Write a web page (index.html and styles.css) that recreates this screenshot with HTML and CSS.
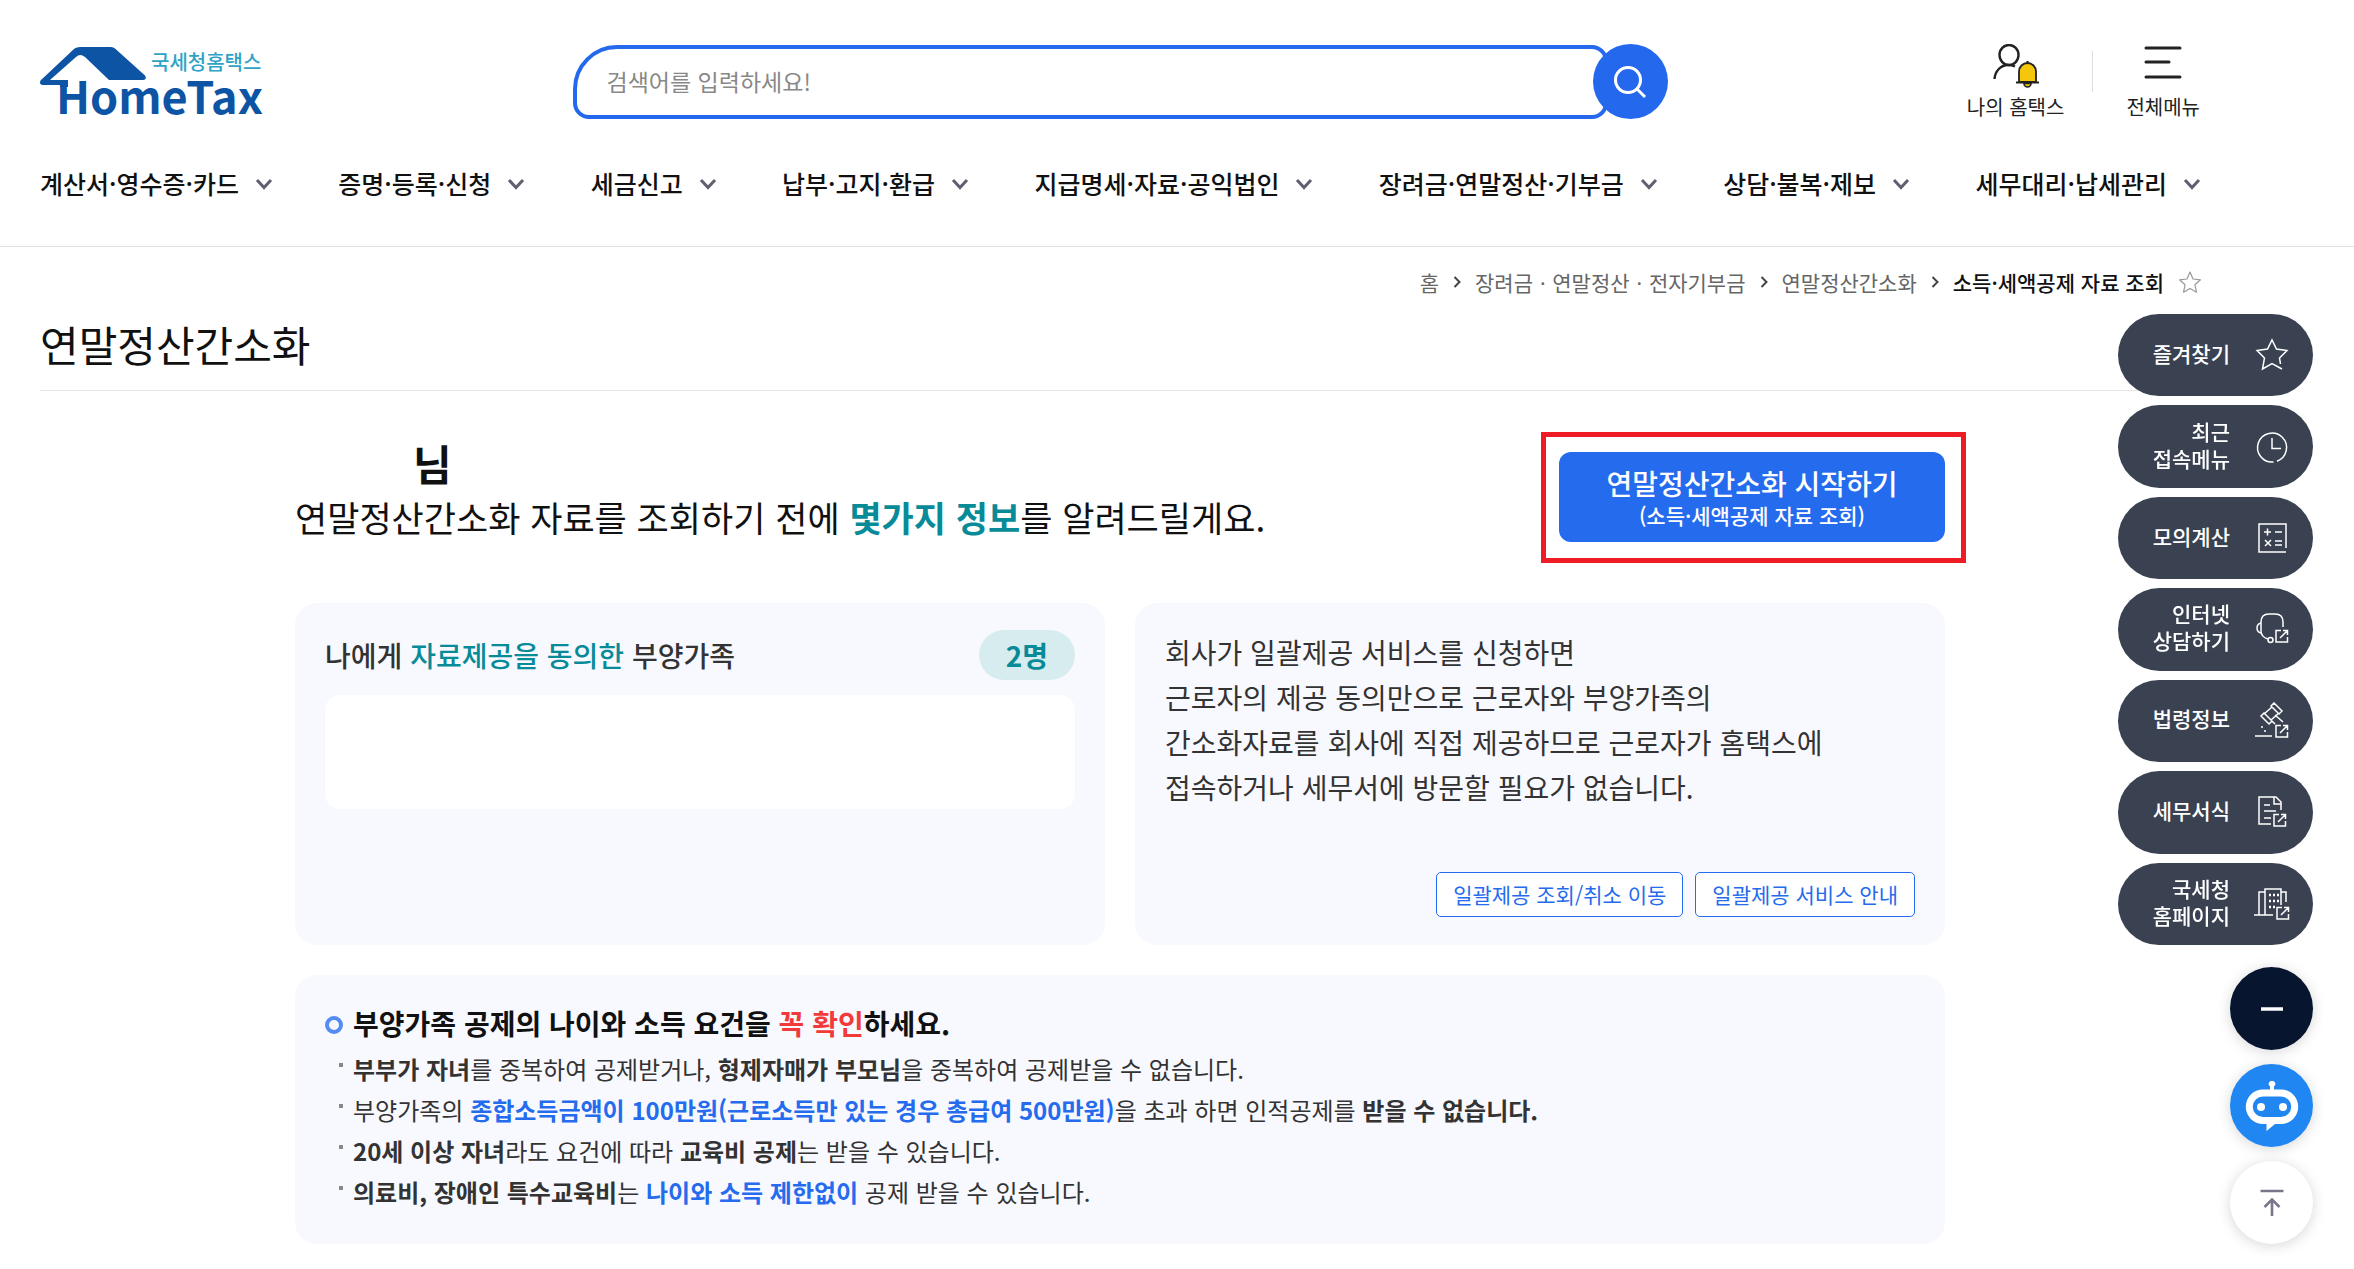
FILE: index.html
```html
<!DOCTYPE html>
<html lang="ko">
<head>
<meta charset="utf-8">
<meta name="viewport" content="width=device-width, initial-scale=1">
<title>연말정산간소화 - 국세청홈택스</title>
<link rel="stylesheet" href="styles.css">
</head>
<body>
<svg class="defs" width="0" height="0" aria-hidden="true">
  <symbol id="chevron" viewBox="0 0 20 20"><path d="M3 7l7 7.500 7-7.500" fill="none" stroke="#5f5f70" stroke-width="3"/></symbol>
  <symbol id="external" viewBox="0 0 14 14"><path d="M6 1.500H1V13H12.500V8M5 9L12 2M8 1.500h4.500V6" fill="none" stroke="currentColor" stroke-width="1.500"/></symbol>
</svg>

<header class="header">
  <div class="header-top container">
    <a class="logo" href="#" aria-label="국세청홈택스 HomeTax">
      <svg width="226" height="72" viewBox="0 0 226 72">
        <path fill="#0d54a5" d="M37 0.500Q38.500 0 40 0H71Q73.500 0 75 1.500L105 28.500Q106.500 30.500 105.500 31.800Q104.500 33 103 33H69L45 10Q40 6 36 10L10 33H28V40H20V38H2Q-1 37 0.500 33.500L34 2Q35.500 0.800 37 0.500Z"/>
        <text class="logo-name" x="111" y="23">국세청홈택스</text>
        <text class="logo-word" x="16" y="67">HomeTax</text>
      </svg>
    </a>
    <form class="search">
      <input class="search-input" type="text" aria-label="검색어" placeholder="검색어를 입력하세요!">
      <button class="search-button" type="button" aria-label="검색">
        <svg width="36" height="36" viewBox="0 0 36 36" fill="none" stroke="#fff" stroke-width="3"><circle cx="16" cy="16" r="12.500"/><path d="M25 25l8 8"/></svg>
      </button>
    </form>
    <div class="tools">
      <a class="tool" href="#">
        <svg width="48" height="46" viewBox="0 1 48 46" fill="none" stroke="#222" stroke-width="2.400">
          <ellipse cx="17" cy="12" rx="9.500" ry="10"/><path d="M2.500 36C3 28 9 22 16 22c3 0 5 .5 7 1.500"/>
          <path d="M27 39V28.500a8.500 8.500 0 0 1 17 0V39Z" fill="#f5c60c" stroke-width="1.800"/><path d="M24 39.500h23M35.500 20v-2" stroke-width="2"/><path d="M32 40.500a3.500 3.500 0 0 0 7 0Z" fill="#f5c60c" stroke-width="1.600"/>
        </svg>
        <span>나의 홈택스</span>
      </a>
      <button class="tool tool-menu" type="button">
        <svg width="48" height="46" viewBox="0 0 48 46" fill="none" stroke="#222" stroke-width="3" stroke-linecap="round"><path d="M7 4h34M7 18h23M7 33h34"/></svg>
        <span>전체메뉴</span>
      </button>
    </div>
  </div>
  <nav class="nav container" aria-label="주 메뉴">
    <a href="#">계산서·영수증·카드<svg class="chevron"><use href="#chevron"/></svg></a>
    <a href="#">증명·등록·신청<svg class="chevron"><use href="#chevron"/></svg></a>
    <a href="#">세금신고<svg class="chevron"><use href="#chevron"/></svg></a>
    <a href="#">납부·고지·환급<svg class="chevron"><use href="#chevron"/></svg></a>
    <a href="#">지급명세·자료·공익법인<svg class="chevron"><use href="#chevron"/></svg></a>
    <a href="#">장려금·연말정산·기부금<svg class="chevron"><use href="#chevron"/></svg></a>
    <a href="#">상담·불복·제보<svg class="chevron"><use href="#chevron"/></svg></a>
    <a href="#">세무대리·납세관리<svg class="chevron"><use href="#chevron"/></svg></a>
  </nav>
</header>

<main class="container">
  <nav class="breadcrumb" aria-label="현재 위치">
    <a href="#">홈</a>
    <svg class="sep" viewBox="0 0 8 12"><path d="M1.500 1L6.500 6l-5 5"/></svg>
    <a href="#">장려금ㆍ연말정산ㆍ전자기부금</a>
    <svg class="sep" viewBox="0 0 8 12"><path d="M1.500 1L6.500 6l-5 5"/></svg>
    <a href="#">연말정산간소화</a>
    <svg class="sep" viewBox="0 0 8 12"><path d="M1.500 1L6.500 6l-5 5"/></svg>
    <strong>소득·세액공제 자료 조회</strong>
    <button class="favorite" type="button" aria-label="즐겨찾기 추가">
      <svg width="24" height="24" viewBox="0 0 24 24" fill="none" stroke="#999" stroke-width="1.200" stroke-linejoin="round"><path d="M12 2l3 7 7.500.8-5.600 5 1.600 7.400L12 18.500l-6.500 3.700 1.600-7.400-5.600-5L9 9Z"/></svg>
    </button>
  </nav>
  <h1 class="page-title">연말정산간소화</h1>

  <div class="content">
    <section class="intro">
      <div class="intro-text">
        <p class="user-name">님</p>
        <p class="intro-lead">연말정산간소화 자료를 조회하기 전에 <strong>몇가지 정보</strong>를 알려드릴게요.</p>
      </div>
      <div class="highlight">
        <button class="start" type="button">연말정산간소화 시작하기<small>(소득·세액공제 자료 조회)</small></button>
      </div>
    </section>

    <div class="cards">
      <section class="card">
        <div class="card-head">
          <h2>나에게 <em>자료제공을 동의한</em> 부양가족</h2>
          <span class="count">2명</span>
        </div>
        <div class="family-list"></div>
      </section>
      <section class="card card-company">
        <p>회사가 일괄제공 서비스를 신청하면<br>근로자의 제공 동의만으로 근로자와 부양가족의<br>간소화자료를 회사에 직접 제공하므로 근로자가 홈택스에<br>접속하거나 세무서에 방문할 필요가 없습니다.</p>
        <div class="card-actions">
          <button class="outline" type="button">일괄제공 조회/취소 이동</button>
          <button class="outline" type="button">일괄제공 서비스 안내</button>
        </div>
      </section>
    </div>

    <section class="card notice">
      <h2>부양가족 공제의 나이와 소득 요건을 <em>꼭 확인</em>하세요.</h2>
      <ul>
        <li><b>부부가 자녀</b>를 중복하여 공제받거나, <b>형제자매가 부모님</b>을 중복하여 공제받을 수 없습니다.</li>
        <li>부양가족의 <b class="blue">종합소득금액이 100만원(근로소득만 있는 경우 총급여 500만원)</b>을 초과 하면 인적공제를 <b>받을 수 없습니다.</b></li>
        <li><b>20세 이상 자녀</b>라도 요건에 따라 <b>교육비 공제</b>는 받을 수 있습니다.</li>
        <li><b>의료비, 장애인 특수교육비</b>는 <b class="blue">나이와 소득 제한없이</b> 공제 받을 수 있습니다.</li>
      </ul>
    </section>
  </div>
</main>

<aside class="quick" aria-label="빠른 메뉴">
  <div class="quick-links">
    <a href="#"><span>즐겨찾기</span>
      <svg viewBox="0 0 38 38"><path d="M29 33L19 27.500 9.500 33 11.500 22 4 14.500 14.500 13 19 4l4.500 9L34 14.500 26.500 22l1 6"/></svg></a>
    <a href="#"><span>최근<br>접속메뉴</span>
      <svg viewBox="0 0 38 38"><path d="M20.500 34A14.500 14.500 0 1 1 24 33.200M19 10v10.500h9"/></svg></a>
    <a href="#"><span>모의계산</span>
      <svg viewBox="0 0 38 38"><path d="M33 29V5H6v28h27M11 13h7M14.500 9.500v7M22 13h7M12 21l6 6M18 21l-6 6M22 22h7M22 26h7"/></svg></a>
    <a href="#"><span>인터넷<br>상담하기</span>
      <svg viewBox="0 0 38 38"><path d="M30 17v-5q0-8-8-8h-6q-8 0-8 8v9q0 6 7 8M8 13q-4 1-4 5t4 5"/><circle cx="17.500" cy="30" r="2.500"/><use href="#external" x="22" y="19" width="14" height="14"/></svg></a>
    <a href="#"><span>법령정보</span>
      <svg viewBox="0 0 38 38"><path d="M18 4l3-3 8 8-3 3ZM8 14l3-3 8 8-3 3ZM19 5l-8 7M26 11l-8 7M18 18l4 4M22 13l8 7M2 34h17M8 25h2M11 29h2"/><use href="#external" x="22" y="22" width="14" height="14"/></svg></a>
    <a href="#"><span>세무서식</span>
      <svg viewBox="0 0 38 38"><path d="M18 31H6V4h17l5 5v8M21 4v7h7M11 12h6M11 18h12M11 25h7"/><use href="#external" x="20" y="20" width="14" height="14"/></svg></a>
    <a href="#"><span>국세청<br>홈페이지</span>
      <svg viewBox="0 0 38 38"><path d="M1 30h19M6 30V7h6M12 30V4h16v16M28 7h5v10"/><path d="M16 10h10M16 16h10M16 22h6" stroke-dasharray="2 2" stroke-width="2.500"/><use href="#external" x="23" y="21" width="14" height="14"/></svg></a>
  </div>
  <div class="quick-buttons">
    <button class="round round-close" type="button" aria-label="빠른 메뉴 접기"><svg width="24" height="24" viewBox="0 0 24 24"><path d="M1 12h22" stroke="#fff" stroke-width="3.500"/></svg></button>
    <button class="round round-bot" type="button" aria-label="챗봇 상담"><svg width="54" height="50" viewBox="0 0 54 50"><path fill="#fff" fill-rule="evenodd" d="M18 8.500h7V5.500a3.200 3.200 0 1 1 4 0v3h7a17.200 17.200 0 0 1 0 34.500h-6l-8.500 7v-7H18a17.200 17.200 0 0 1 0-34.500ZM18 15.500a10 10 0 0 0 0 20.500h18a10 10 0 0 0 0-20.500Z"/><circle cx="16" cy="26" r="4" fill="#fff"/><circle cx="38" cy="26" r="4" fill="#fff"/></svg></button>
    <button class="round round-top" type="button" aria-label="맨 위로"><svg width="28" height="30" viewBox="0 0 28 30" fill="none" stroke="#77778c" stroke-width="2.600"><path d="M2.500 3h23M14 28V12M6.500 19l7.500-7.500L21.500 19"/></svg></button>
  </div>
</aside>
</body>
</html>
```
FILE: styles.css
```css
*, *::before { box-sizing: border-box; }

body {
  margin: 0;
  background: #fff;
  color: #111;
  font-family: "Noto Sans CJK KR", "Noto Sans", sans-serif;
}

h1, h2, p, ul { margin: 0; padding: 0; }
ul { list-style: none; }
em { font-style: normal; }
a { color: inherit; text-decoration: none; }
button { padding: 0; border: 0; background: none; color: inherit; font: inherit; cursor: pointer; }
svg { flex: none; }
.defs { position: absolute; }

.container { padding: 0 154px 0 40px; }

/* Header */
.header { padding-top: 44px; border-bottom: 1px solid #e2e2e2; }
.header-top {
  display: grid;
  grid-template-columns: 1fr minmax(0, 1095px) 1fr;
  align-items: start;
  height: 74px;
}
.logo svg { display: block; margin-top: 3px; overflow: visible; }
.logo-name { font-size: 20px; font-weight: 500; fill: #2fa3c4; }
.logo-word { font-size: 45px; font-weight: 700; fill: #0d54a5; }

.search { display: flex; align-items: center; }
.search-input {
  flex: 1;
  min-width: 0;
  height: 74px;
  padding: 0 30px 2px;
  border: 4px solid #2468ee;
  border-radius: 44px 16px 16px 16px;
  background: #fff;
  font: 400 23px/34px "Noto Sans CJK KR", "Noto Sans", sans-serif;
  outline: 0;
}
.search-input::placeholder { color: #888; opacity: 1; }
.search-button {
  display: grid;
  place-items: center;
  width: 75px;
  height: 75px;
  margin-left: -15px;
  border-radius: 50%;
  background: #2468ee;
}

.tools { display: flex; justify-content: flex-end; }
.tool {
  display: flex;
  flex-direction: column;
  align-items: center;
  gap: 2px;
  padding: 0 28px;
  font-size: 20px;
  line-height: 30px;
  color: #222;
}
.tool-menu { position: relative; padding: 0 0 0 34px; }
.tool-menu::before {
  content: "";
  position: absolute;
  left: 0;
  top: 7px;
  width: 1px;
  height: 41px;
  background: #ddd;
}

.nav {
  display: flex;
  justify-content: space-between;
  padding: 45px 152px 43px 40px;
}
.nav a {
  display: flex;
  align-items: center;
  gap: 15px;
  font-size: 25px;
  font-weight: 500;
  line-height: 40px;
  white-space: nowrap;
}
.chevron { width: 20px; height: 20px; }

/* Page heading */
.breadcrumb {
  display: flex;
  justify-content: flex-end;
  align-items: center;
  gap: 14px;
  margin-right: -2px;
  padding-top: 19px;
  font-size: 21px;
  line-height: 32px;
  color: #666;
}
.breadcrumb strong { font-weight: 500; color: #111; }
.sep { width: 8px; height: 12px; fill: none; stroke: #444; stroke-width: 2; }
.favorite { display: flex; }
.page-title {
  padding: 15px 0;
  border-bottom: 1px solid #e6e6e6;
  font-size: 42px;
  font-weight: 400;
  line-height: 62px;
}

/* Content */
.content { max-width: 1650px; margin: 0 auto; padding: 41px 0 24px; }
.intro { display: flex; justify-content: space-between; align-items: flex-start; }
.user-name { padding-left: 118px; font-size: 42px; font-weight: 700; line-height: 62px; }
.intro-lead { font-size: 35px; line-height: 46px; }
.intro-lead strong { font-weight: 700; color: #078b98; }
.highlight { margin-right: -21px; padding: 15px 16px 16px 13px; border: 5px solid #ee1c24; }
.start {
  display: block;
  width: 386px;
  height: 90px;
  border-radius: 12px;
  background: #256bed;
  color: #fff;
  font-size: 28px;
  font-weight: 500;
  line-height: 36px;
}
.start small { display: block; font-size: 21px; line-height: 28px; }

.cards { display: grid; grid-template-columns: 1fr 1fr; gap: 30px; margin: 40px 0 30px; }
.card { padding: 27px 30px 28px; border-radius: 22px; background: #f8f9fe; color: #333; }
.card-head { display: flex; justify-content: space-between; align-items: center; }
.card-head h2 { font-size: 28px; font-weight: 500; line-height: 50px; }
.card-head em { color: #078b98; }
.count {
  padding: 0 27px;
  border-radius: 25px;
  background: #d7ecee;
  color: #078b98;
  font-size: 28px;
  font-weight: 700;
  line-height: 50px;
}
.family-list { height: 114px; margin-top: 15px; border-radius: 15px; background: #fff; }
.card-company p { font-size: 28px; line-height: 45px; }
.card-actions { display: flex; justify-content: flex-end; gap: 12px; margin-top: 62px; }
.outline {
  height: 45px;
  padding: 0 16px 2px;
  border: 1px solid #256bed;
  border-radius: 5px;
  background: #fff;
  color: #256bed;
  font-size: 21px;
  line-height: 40px;
}

.notice { padding-bottom: 32px; }
.notice h2 {
  font-size: 28px;
  font-weight: 700;
  line-height: 42px;
  color: #111;
}
.notice h2::before {
  content: "";
  display: inline-block;
  width: 18px;
  height: 18px;
  margin-right: 10px;
  border: 4px solid #558cf2;
  border-radius: 50%;
  vertical-align: 1px;
}
.notice h2 em { color: #f23a3a; }
.notice ul { padding-top: 4px; }
.notice li {
  position: relative;
  padding-left: 28px;
  font-size: 24px;
  line-height: 41px;
}
.notice li::before {
  content: "";
  position: absolute;
  left: 14px;
  top: 15px;
  width: 4px;
  height: 4px;
  background: #888;
}
.notice b { font-weight: 700; }
.notice .blue { color: #256bed; }

/* Floating quick menu */
.quick {
  position: fixed;
  top: 314px;
  right: 41px;
  display: flex;
  flex-direction: column;
  align-items: flex-end;
  gap: 22px;
}
.quick-links {
  display: grid;
  grid-auto-rows: 1fr;
  gap: 9px;
  width: 195px;
  height: 631px;
}
.quick-links a {
  display: flex;
  justify-content: flex-end;
  align-items: center;
  gap: 23px;
  padding-right: 22px;
  border-radius: 42px;
  background: #3a4252;
  color: #fff;
  font-size: 21px;
  font-weight: 500;
  line-height: 27px;
  text-align: right;
}
.quick-links span { padding-bottom: 4px; }
.quick-links svg { width: 38px; height: 38px; fill: none; stroke: currentColor; stroke-width: 1.5; }
.quick-buttons { display: flex; flex-direction: column; gap: 14px; }
.round {
  display: grid;
  place-items: center;
  width: 83px;
  height: 83px;
  border-radius: 50%;
  box-shadow: 0 2px 14px rgba(0, 0, 0, 0.16);
}
.round-close { background: #07152e; }
.round-bot { background: #2087f2; }
.round-top { background: #fff; }
```
